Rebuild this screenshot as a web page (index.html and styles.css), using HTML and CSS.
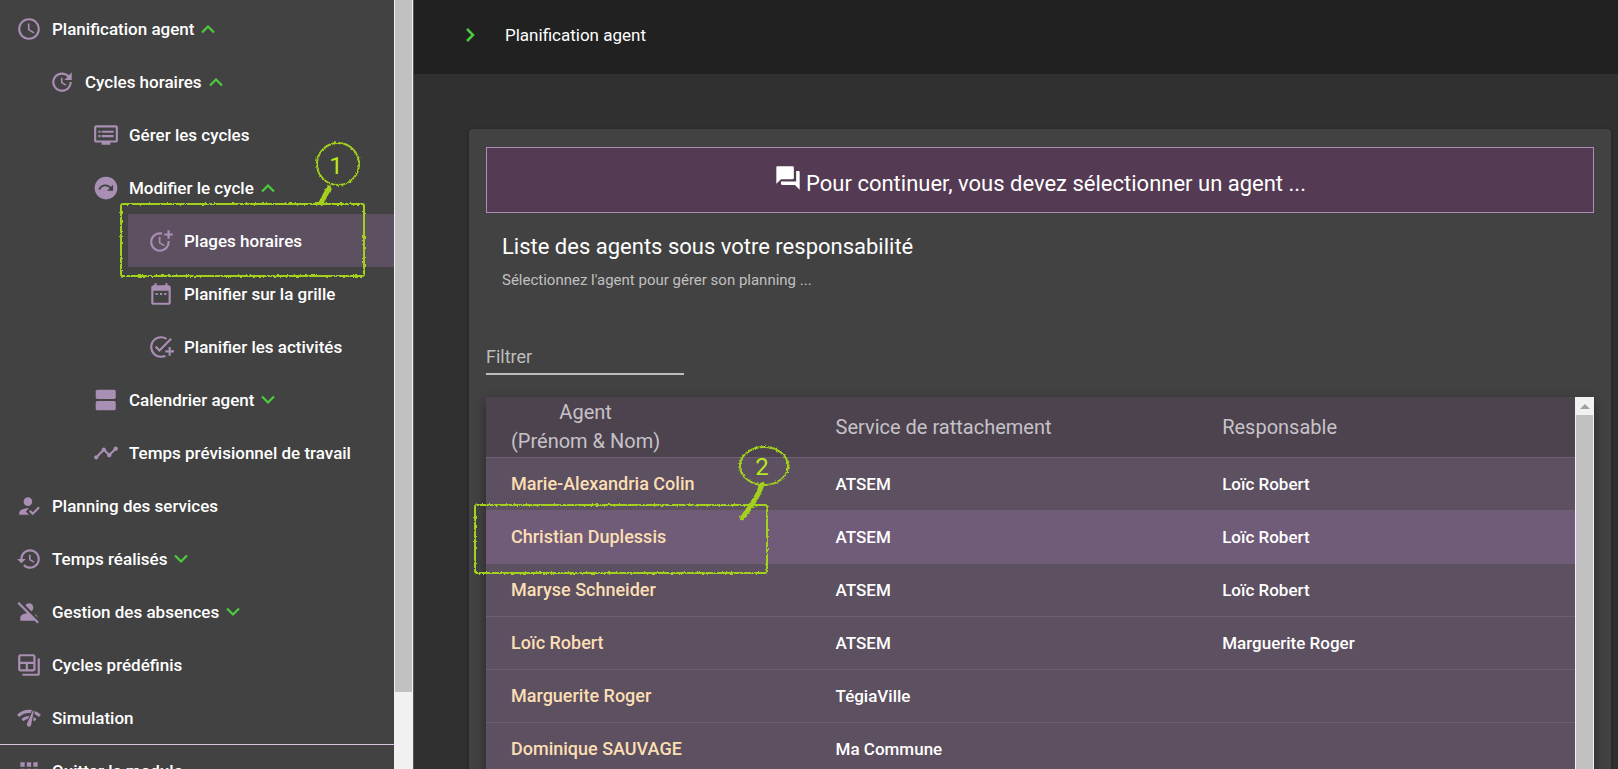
FILE: index.html
```html
<!DOCTYPE html>
<html lang="fr">
<head>
<meta charset="utf-8">
<title>Planification agent</title>
<link rel="stylesheet" href="styles.css">
</head>
<body>
<svg class="defs" aria-hidden="true">
  <filter id="rough" filterUnits="userSpaceOnUse" x="-10" y="-10" width="340" height="160">
    <feTurbulence type="fractalNoise" baseFrequency="0.4" numOctaves="2" seed="4" result="n"/>
    <feDisplacementMap in="SourceGraphic" in2="n" scale="3" xChannelSelector="R" yChannelSelector="G"/>
  </filter>
  <symbol id="up" viewBox="0 0 14 10"><path d="M1 8.500l6-6 6 6" fill="none" stroke="currentColor" stroke-width="2.200"/></symbol>
  <symbol id="down" viewBox="0 0 14 10"><path d="M1 1.500l6 6 6-6" fill="none" stroke="currentColor" stroke-width="2.200"/></symbol>
  <symbol id="schedule" viewBox="0 0 24 24"><path d="M11.990 2C6.470 2 2 6.480 2 12s4.470 10 9.990 10C17.520 22 22 17.520 22 12S17.520 2 11.990 2zM12 20c-4.420 0-8-3.580-8-8s3.580-8 8-8 8 3.580 8 8-3.580 8-8 8zm.5-13H11v6l5.250 3.150.750-1.230-4.500-2.670z"/></symbol>
  <symbol id="update" viewBox="0 0 24 24"><path d="M21 10.120h-6.780l2.740-2.820c-2.730-2.700-7.150-2.800-9.880-.100-2.730 2.710-2.730 7.080 0 9.790s7.150 2.710 9.880 0C18.320 15.650 19 14.080 19 12.100h2c0 1.980-.880 4.550-2.640 6.290-3.510 3.480-9.210 3.480-12.720 0-3.500-3.470-3.530-9.110-.020-12.580s9.140-3.470 12.650 0L21 3v7.120zM12.500 8v4.250l3.500 2.080-.720 1.210L11 13V8h1.500z"/></symbol>
  <symbol id="dvr" viewBox="0 0 24 24"><path d="M21 3H3c-1.100 0-2 .9-2 2v12c0 1.100.9 2 2 2h5v2h8v-2h5c1.100 0 1.990-.9 1.990-2L23 5c0-1.100-.9-2-2-2zm0 14H3V5h18v12zm-2-9H8v2h11V8zm0 4H8v2h11v-2zM7 8H5v2h2V8zm0 4H5v2h2v-2z"/></symbol>
  <symbol id="redo" viewBox="0 0 24 24"><circle cx="12" cy="12" r="10.500"/><path d="M5.800 13.500C7.500 9 13.500 8 17 12.500" fill="none" stroke="#424242" stroke-width="1.600"/><path d="M18.500 9v5.500H13z" fill="#424242"/></symbol>
  <symbol id="moretime" viewBox="0 0 24 24"><path d="M10 8v6l4.700 2.900.8-1.200-4-2.400V8z"/><path d="M17.920 12c.050.330.080.660.080 1 0 3.900-3.100 7-7 7s-7-3.100-7-7 3.100-7 7-7c.7 0 1.370.1 2 .290V4.230C12.360 4.080 11.690 4 11 4c-5 0-9 4-9 9s4 9 9 9 9-4 9-9c0-.340-.020-.670-.060-1h-2.020z"/><path d="M20 5V2h-2v3h-3v2h3v3h2V7h3V5z"/></symbol>
  <symbol id="daterange" viewBox="0 0 24 24"><path d="M9 11H7v2h2v-2zm4 0h-2v2h2v-2zm4 0h-2v2h2v-2zm2-7h-1V2h-2v2H8V2H6v2H5c-1.110 0-1.990.9-1.990 2L3 20c0 1.100.890 2 2 2h14c1.100 0 2-.9 2-2V6c0-1.100-.9-2-2-2zm0 16H5V9h14v11z"/></symbol>
  <symbol id="addtask" viewBox="0 0 24 24"><path d="M22 5.180L10.590 16.600l-4.240-4.240 1.410-1.410 2.830 2.830 10-10L22 5.180zM12 20c-4.410 0-8-3.590-8-8s3.590-8 8-8c1.570 0 3.040.460 4.280 1.250l1.450-1.450C16.100 2.670 14.130 2 12 2 6.480 2 2 6.480 2 12s4.480 10 10 10c1.730 0 3.360-.440 4.780-1.220l-1.500-1.500c-1 .460-2.110.720-3.280.720zm7-5h-3v2h3v3h2v-3h3v-2h-3v-3h-2v3z"/></symbol>
  <symbol id="agenda" viewBox="0 0 24 24"><rect x="2.500" y="2.500" width="18.500" height="8.500" rx="1.500"/><rect x="2.500" y="13" width="18.500" height="8.500" rx="1.500"/></symbol>
  <symbol id="timeline" viewBox="0 0 24 24"><path d="M23 8c0 1.100-.9 2-2 2-.180 0-.350-.020-.510-.070l-3.560 3.550c.050.160.070.340.070.520 0 1.100-.9 2-2 2s-2-.9-2-2c0-.180.020-.360.070-.520l-2.550-2.550c-.160.050-.340.070-.520.070s-.360-.020-.520-.070l-4.550 4.560c.050.160.070.330.070.510 0 1.100-.9 2-2 2s-2-.9-2-2 .9-2 2-2c.180 0 .350.020.510.070l4.560-4.550C8.020 9.360 8 9.180 8 9c0-1.100.9-2 2-2s2 .9 2 2c0 .180-.020.360-.070.520l2.550 2.550c.160-.050.340-.070.520-.070s.360.020.520.070l3.550-3.560C19.020 8.350 19 8.180 19 8c0-1.100.9-2 2-2s2 .9 2 2z"/></symbol>
  <symbol id="howtoreg" viewBox="0 0 24 24"><path d="M9 17l3-2.940c-.390-.040-.680-.060-1-.060-2.670 0-8 1.340-8 4v2h9l-3-3zm2-5c2.210 0 4-1.790 4-4s-1.790-4-4-4-4 1.790-4 4 1.790 4 4 4zM15.470 20.500L12 17l1.400-1.410 2.070 2.080 5.130-5.170 1.400 1.410z"/></symbol>
  <symbol id="history" viewBox="0 0 24 24"><path d="M13 3c-4.970 0-9 4.030-9 9H1l3.890 3.890.070.140L9 12H6c0-3.870 3.130-7 7-7s7 3.130 7 7-3.130 7-7 7c-1.930 0-3.680-.790-4.940-2.060l-1.420 1.420C8.270 19.990 10.510 21 13 21c4.970 0 9-4.030 9-9s-4.030-9-9-9zm-1 5v5l4.280 2.540.720-1.210-3.500-2.080V8H12z"/></symbol>
  <symbol id="personoff" viewBox="0 0 24 24"><path d="M8.650 5.820C9.360 4.720 10.600 4 12 4c2.210 0 4 1.790 4 4 0 1.400-.720 2.640-1.820 3.350L8.650 5.820zM20 17.170c-.020-1.100-.630-2.110-1.610-2.620-.540-.280-1.130-.540-1.770-.760L20 17.170zm1.190 4.020L2.810 2.810 1.390 4.220l8.890 8.890c-1.810.230-3.390.790-4.670 1.450-1 .510-1.610 1.540-1.610 2.660V20h13.170l2.610 2.610 1.410-1.420z"/></symbol>
  <symbol id="backuptable" viewBox="0 0 24 24"><path d="M20 6v14H6v2h14c1.100 0 2-.9 2-2V6h-2z"/><path d="M16 2H4c-1.100 0-2 .9-2 2v12c0 1.100.9 2 2 2h12c1.100 0 2-.9 2-2V4c0-1.100-.9-2-2-2zM9 16H4v-5h5v5zm7 0h-5v-5h5v5zm0-7H4V4h12v5z"/></symbol>
  <symbol id="networkcheck" viewBox="0 0 24 24"><path d="M15.900 5c-.170 0-.320.090-.410.230l-.070.150-5.180 11.650c-.160.290-.260.610-.260.960 0 1.110.9 2.010 2.010 2.010.960 0 1.770-.680 1.960-1.590l.010-.030L16.400 5.500c0-.280-.220-.500-.500-.500zM1 9l2 2c2.880-2.880 6.790-4.080 10.530-3.620l1.190-2.680C9.890 3.840 4.740 5.270 1 9zm20 2l2-2c-1.640-1.640-3.550-2.820-5.590-3.570l-.530 2.820c1.500.620 2.900 1.530 4.120 2.750zm-4 4l2-2c-.8-.8-1.700-1.420-2.660-1.890l-.550 2.920c.420.270.830.590 1.210.970zM5 13l2 2c1.130-1.130 2.560-1.790 4.030-2l1.280-2.880c-2.630-.080-5.300.870-7.310 2.880z"/></symbol>
  <symbol id="apps" viewBox="0 0 24 24"><path d="M4 8h4V4H4v4zm6 12h4v-4h-4v4zm-6 0h4v-4H4v4zm0-6h4v-4H4v4zm6 0h4v-4h-4v4zm6-10v4h4V4h-4zm-6 4h4V4h-4v4zm6 6h4v-4h-4v4zm0 6h4v-4h-4v4z"/></symbol>
  <symbol id="forum" viewBox="0 0 24 24"><path d="M21 6h-2v9H6v2c0 .550.450 1 1 1h11l4 4V7c0-.550-.450-1-1-1zm-4 6V3c0-.550-.450-1-1-1H3c-.550 0-1 .450-1 1v14l4-4h10c.550 0 1-.450 1-1z"/></symbol>
</svg>

<div class="app">
  <aside class="sidebar">
    <nav class="nav" aria-label="Menu principal">
      <button class="item l1"><svg class="icon"><use href="#schedule"/></svg>Planification agent<svg class="chev"><use href="#up"/></svg></button>
      <button class="item l2"><svg class="icon"><use href="#update"/></svg>Cycles horaires<svg class="chev"><use href="#up"/></svg></button>
      <a class="item l3" href="#"><svg class="icon"><use href="#dvr"/></svg>Gérer les cycles</a>
      <button class="item l3"><svg class="icon"><use href="#redo"/></svg>Modifier le cycle<svg class="chev"><use href="#up"/></svg></button>
      <a class="item l4 active" href="#"><svg class="icon"><use href="#moretime"/></svg>Plages horaires
        <svg class="note note-one" viewBox="0 0 250 142">
          <g filter="url(#rough)" fill="none" stroke="#a3d01c">
            <rect x="4" y="65" width="243" height="72" rx="2" stroke-width="2"/>
            <circle cx="221" cy="25" r="21" stroke-width="2"/>
            <path d="M213 47l-10 19" stroke-width="5"/>
          </g>
          <text x="219" y="35" text-anchor="middle">1</text>
        </svg>
      </a>
      <a class="item l4" href="#"><svg class="icon"><use href="#daterange"/></svg>Planifier sur la grille</a>
      <a class="item l4" href="#"><svg class="icon"><use href="#addtask"/></svg>Planifier les activités</a>
      <button class="item l3"><svg class="icon"><use href="#agenda"/></svg>Calendrier agent<svg class="chev"><use href="#down"/></svg></button>
      <a class="item l3" href="#"><svg class="icon"><use href="#timeline"/></svg>Temps prévisionnel de travail</a>
      <a class="item l1" href="#"><svg class="icon"><use href="#howtoreg"/></svg>Planning des services</a>
      <button class="item l1"><svg class="icon"><use href="#history"/></svg>Temps réalisés<svg class="chev"><use href="#down"/></svg></button>
      <button class="item l1"><svg class="icon"><use href="#personoff"/></svg>Gestion des absences<svg class="chev"><use href="#down"/></svg></button>
      <a class="item l1" href="#"><svg class="icon"><use href="#backuptable"/></svg>Cycles prédéfinis</a>
      <a class="item l1" href="#"><svg class="icon"><use href="#networkcheck"/></svg>Simulation</a>
      <a class="item l1 quit" href="#"><svg class="icon"><use href="#apps"/></svg>Quitter le module</a>
    </nav>
    <div class="scrollbar"><div class="thumb"></div></div>
  </aside>

  <div class="content">
    <header class="topbar">
      <svg class="crumb" viewBox="0 0 10 14"><path d="M2 1l6 6-6 6" fill="none" stroke="currentColor" stroke-width="2.500"/></svg>
      <span>Planification agent</span>
    </header>
    <main class="card">
      <div class="banner"><svg class="forum"><use href="#forum"/></svg><span>Pour continuer, vous devez sélectionner un agent ...</span></div>
      <div class="heading">
        <h1>Liste des agents sous votre responsabilité</h1>
        <p>Sélectionnez l'agent pour gérer son planning ...</p>
      </div>
      <input class="filter" type="text" placeholder="Filtrer" aria-label="Filtrer">
      <div class="grid">
        <table>
          <thead>
            <tr><th class="c1"><span>Agent<br>(Prénom &amp; Nom)</span></th><th class="c2">Service de rattachement</th><th class="c3">Responsable</th></tr>
          </thead>
          <tbody>
            <tr><td>Marie-Alexandria Colin</td><td>ATSEM</td><td>Loïc Robert</td></tr>
            <tr class="selected"><td>Christian Duplessis
              <svg class="note note-two" viewBox="0 0 320 134">
                <g filter="url(#rough)" fill="none" stroke="#a3d01c">
                  <rect x="4" y="61" width="292" height="68" rx="2" stroke-width="2"/>
                  <ellipse cx="293" cy="22" rx="24" ry="19" stroke-width="2"/>
                  <path d="M291 40q-4 14-20 34" stroke-width="5" stroke-linecap="round"/>
                </g>
                <text x="291" y="31" text-anchor="middle">2</text>
              </svg></td><td>ATSEM</td><td>Loïc Robert</td></tr>
            <tr><td>Maryse Schneider</td><td>ATSEM</td><td>Loïc Robert</td></tr>
            <tr><td>Loïc Robert</td><td>ATSEM</td><td>Marguerite Roger</td></tr>
            <tr><td>Marguerite Roger</td><td>TégiaVille</td><td></td></tr>
            <tr><td>Dominique SAUVAGE</td><td>Ma Commune</td><td></td></tr>
          </tbody>
        </table>
        <div class="scrollbar">
          <div class="arrow"><svg viewBox="0 0 10 5"><path d="M0 5l5-5 5 5z"/></svg></div>
          <div class="thumb"></div>
        </div>
      </div>
    </main>
  </div>
</div>
</body>
</html>
```

FILE: styles.css
```css
* { box-sizing: border-box; }
html, body { height: 100%; margin: 0; }
body {
  overflow: hidden;
  background: #303030;
  color: #fff;
  font: 18px/26px Roboto, "Liberation Sans", sans-serif;
}
.defs { position: absolute; width: 0; height: 0; }
.app { display: flex; height: 100vh; }

.sidebar { display: flex; flex: 0 0 414px; height: 100%; border-right: 1px solid #555; background: #424242; }
.nav { flex: 1; padding-top: 2px; overflow: hidden; }
.item {
  display: flex;
  align-items: center;
  width: 100%;
  height: 53px;
  margin: 0;
  padding: 0;
  border: 0;
  background: none;
  color: #fff;
  font: 500 17px/26px Roboto, "Liberation Sans", sans-serif;
  text-align: left;
  text-decoration: none;
  white-space: nowrap;
}
.l1 { padding-left: 16px; }
.l2 { padding-left: 49px; }
.l3 { padding-left: 93px; }
.l4 { width: auto; margin-left: 128px; padding-left: 20px; }
.active { position: relative; background: #5d5060; }
.quit { border-top: 1px solid #d9c3e0; }
.icon { flex: none; width: 26px; height: 26px; margin-right: 10px; fill: #a98fb3; }
.chev { flex: none; width: 14px; height: 10px; margin-left: 7px; color: #4ccb3f; }

.scrollbar { flex: 0 0 19px; padding: 0 1px; background: #f1f1f1; }
.thumb { height: 100%; background: #c1c1c1; }
.sidebar .thumb { height: 90%; }
.arrow { display: flex; align-items: center; justify-content: center; height: 18px; }
.arrow svg { width: 10px; height: 5px; fill: #a0a0a0; }

.note { position: absolute; pointer-events: none; overflow: visible; }
.note text { fill: #b5ea1a; font-size: 24px; font-weight: 400; }
.note-one { left: -11px; top: -75px; width: 250px; height: 142px; }
.note-two { left: -15px; top: -67px; width: 320px; height: 134px; }

.content { display: flex; flex: 1; flex-direction: column; min-width: 0; }
.topbar { display: flex; flex: 0 0 74px; align-items: center; padding: 0 51px 5px; background: #212121; font-size: 17px; }
.crumb { width: 10px; height: 14px; margin-right: 30px; color: #4ccb3f; }
.card {
  flex: 1 0 auto;
  margin: 55px 7px 0 55px;
  padding: 18px 17px 0;
  border-radius: 4px 4px 0 0;
  background: #424242;
  box-shadow: 0 1px 4px rgba(0, 0, 0, .3);
}
.banner {
  display: flex;
  align-items: center;
  justify-content: center;
  height: 66px;
  padding-top: 7px;
  border: 1px solid #a98fb3;
  background: #543a52;
  font-size: 22px;
}
.forum { width: 28px; height: 28px; margin: 0 4px 12px 0; fill: #fff; }
.heading { padding: 20px 16px 0; }
h1 { margin: 0; font-size: 22px; font-weight: 400; line-height: 28px; }
p { margin: 6px 0 0; color: #c0c0c0; font-size: 15px; line-height: 26px; }
.filter {
  display: block;
  width: 198px;
  height: 36px;
  margin: 46px 0 22px;
  padding: 0;
  border: 0;
  border-bottom: 2px solid #bdbdbd;
  background: none;
  color: #fff;
  font: 18px/26px Roboto, "Liberation Sans", sans-serif;
}
.filter::placeholder { color: #bdbdbd; opacity: 1; }

.grid { display: flex; box-shadow: 0 5px 12px rgba(0, 0, 0, .4); }
table { flex: 1; border-spacing: 0; table-layout: fixed; background: #5d5060; }
th { height: 60px; padding: 0; background: #4c434f; color: #c6c2c7; font-size: 20px; font-weight: 400; line-height: 29px; text-align: left; }
th span { display: inline-block; text-align: center; }
td { position: relative; height: 53px; padding: 0; border-top: 1px solid #6c5f6f; font-size: 17px; font-weight: 500; white-space: nowrap; }
th:first-child, td:first-child { padding-left: 25px; }
td:first-child { color: #fbdfb4; font-size: 18px; }
.c1 { width: 32.1%; }
.c2 { width: 35.5%; }
.c3 { width: 32.4%; }
.selected { background: #705c78; }
.selected td:first-child { z-index: 1; }
```
